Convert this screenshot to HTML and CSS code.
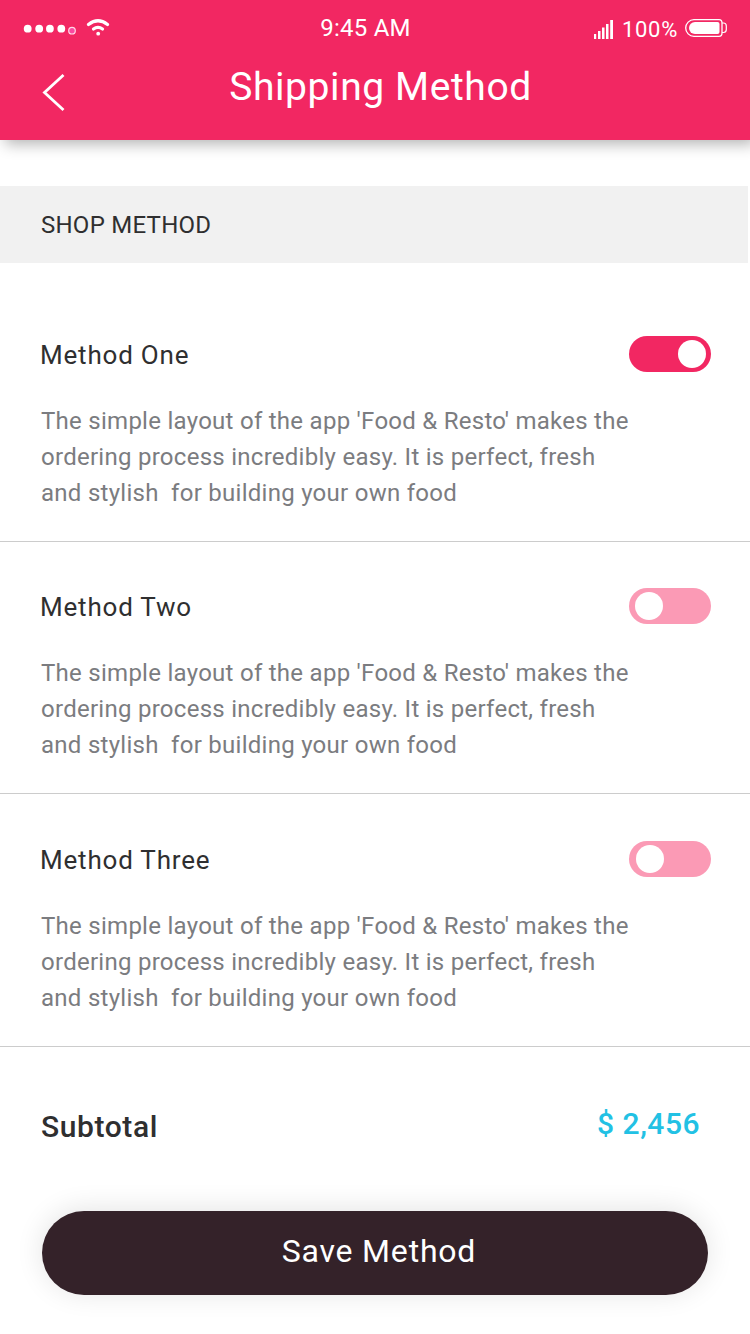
FILE: index.html
```html
<!DOCTYPE html>
<html lang="en">
<head>
<meta charset="utf-8">
<title>Shipping Method</title>
<link rel="stylesheet" href="styles.css">
</head>
<body>
<header class="header">
  <div class="status">
    <div class="status-left">
      <svg class="dots" width="54" height="14" viewBox="0 0 54 14"><g fill="#fff"><circle cx="4.700" cy="5.700" r="3.900"/><circle cx="16.200" cy="5.700" r="3.900"/><circle cx="26.900" cy="5.700" r="3.900"/><circle cx="38.300" cy="5.700" r="3.900"/></g><circle cx="49" cy="7.700" r="3.300" fill="#fb49a0" stroke="#ffd9e6" stroke-width="1.200"/></svg>
      <svg class="wifi" width="24" height="19" viewBox="0 0 24 19"><g fill="none" stroke="#fff" stroke-width="3.200" stroke-linecap="round"><path d="M2.500 6.500Q12-1 21.500 6.500"/><path d="M7.500 11Q12 7.700 16.500 11"/></g><circle cx="12.200" cy="15.700" r="1.900" fill="#fff"/></svg>
    </div>
    <span class="time">9:45 AM</span>
    <div class="status-right">
      <svg class="signal" width="20" height="19" viewBox="0 0 20 19" fill="#fff"><path d="M0 14h2.200v5H0zM4 11h2.500v8H4zM8 7.500h2.500V19H8zM12 4h2.500v15H12zM16.200 0H19v19h-2.800z"/></svg>
      <span class="percent">100%</span>
      <svg class="battery" width="43" height="18" viewBox="0 0 43 18"><path d="M9 .7h25q3 0 3 3.300v10q0 3.300-3 3.300H9A8.300 8.300 0 0 1 9 .7z" fill="none" stroke="#fff" stroke-width="1.300"/><path d="M10 3H32.500q2 0 2 2v8q0 2-2 2H10a6 6 0 0 1 0-12z" fill="#fff"/><path d="M37 4h1.500q2.800 0 2.800 3v3.500q0 3-2.800 3H37" fill="none" stroke="#fff" stroke-width="1.200"/></svg>
    </div>
  </div>
  <div class="titlebar">
    <svg class="back" width="24" height="40" viewBox="0 0 24 40"><path d="M21.500 2 2.500 19.500 21.500 37" fill="none" stroke="#fff" stroke-width="2.800"/></svg>
    <h1 class="title">Shipping Method</h1>
  </div>
</header>
<main>
  <h2 class="section">SHOP METHOD</h2>
  <section class="method first">
    <div class="row"><h3 class="name">Method One</h3><span class="toggle on"><i class="knob"></i></span></div>
    <p class="desc">The simple layout of the app 'Food &amp; Resto' makes the<br>ordering process incredibly easy. It is perfect, fresh<br>and stylish&nbsp; for building your own food</p>
  </section>
  <section class="method second">
    <div class="row"><h3 class="name">Method Two</h3><span class="toggle"><i class="knob"></i></span></div>
    <p class="desc">The simple layout of the app 'Food &amp; Resto' makes the<br>ordering process incredibly easy. It is perfect, fresh<br>and stylish&nbsp; for building your own food</p>
  </section>
  <section class="method third">
    <div class="row"><h3 class="name">Method Three</h3><span class="toggle"><i class="knob"></i></span></div>
    <p class="desc">The simple layout of the app 'Food &amp; Resto' makes the<br>ordering process incredibly easy. It is perfect, fresh<br>and stylish&nbsp; for building your own food</p>
  </section>
  <div class="total"><span class="label">Subtotal</span><span class="price">$ 2,456</span></div>
  <button class="save">Save Method</button>
</main>
</body>
</html>
```
FILE: styles.css
```css
* { box-sizing: border-box; margin: 0; padding: 0; }
body { width: 750px; height: 1334px; overflow: hidden; background: #fff; font-family: Roboto, sans-serif; color: #2f2f30; }
.header { height: 140px; background: #f22762; color: #fff; box-shadow: 5px 4px 14px rgba(0,0,0,.3); }
.status { height: 56px; display: grid; grid-template-columns: 1fr auto 1fr; padding: 0 23px 0 23px; }
.status svg { display: block; }
.status-left { display: flex; align-items: flex-start; gap: 9px; }
.dots { margin-top: 23px; }
.wifi { margin-top: 18px; }
.time { font-size: 24px; line-height: 28px; padding-top: 14px; letter-spacing: .25px; margin-left: -19px; }
.status-right { display: flex; justify-content: flex-end; align-items: flex-start; }
.signal { margin: 20px 8px 0 0; }
.percent { font-size: 22px; line-height: 26px; padding-top: 17px; margin-right: 7px; letter-spacing: .7px; }
.battery { margin-top: 19px; margin-right: -1px; }
.titlebar { display: grid; grid-template-columns: 1fr auto 1fr; padding: 0 42px; }
.back { margin-top: 17px; }
.title { font-size: 39px; font-weight: 400; line-height: 48px; letter-spacing: .6px; padding-top: 7px; margin-left: 11px; }
.section { width: 748px; height: 77px; margin-top: 46px; padding: 1px 0 0 41px; background: #f1f1f1; font-size: 24px; font-weight: 400; line-height: 77px; letter-spacing: .25px; }
.method { height: 252px; border-bottom: 1px solid #ccc; padding: 46px 39px 0 41px; }
.first { height: 279px; padding-top: 73px; }
.third { height: 253px; padding-top: 47px; }
.row { display: flex; justify-content: space-between; height: 36px; }
.name { margin-left: -1px; font-size: 26px; font-weight: 400; line-height: 38px; letter-spacing: .8px; }
.toggle { width: 82px; height: 36px; border-radius: 18px; background: #fb9ab5; padding: 4px 6px; }
.knob { display: block; width: 28px; height: 28px; border-radius: 50%; background: #fff; }
.on { background: #f22762; }
.on .knob { margin-left: 43px; }
.third .knob { margin-left: 1px; }
.desc { margin-top: 31px; font-size: 24px; line-height: 36px; letter-spacing: .27px; color: #7b7c80; }
.total { height: 164px; display: flex; justify-content: space-between; padding: 60px 50px 0 41px; font-size: 30px; line-height: 40px; font-weight: 500; letter-spacing: .6px; }
.price { color: #22c1e4; margin-top: -3px; letter-spacing: .5px; }
.save { display: block; width: 666px; height: 84px; margin-left: 42px; border: 0; border-radius: 42px; background: #342229; color: #fff; font: 400 32px/38px Roboto, sans-serif; letter-spacing: .8px; padding: 0 0 5px 8px; box-shadow: 0 -2px 28px rgba(0,0,0,.11); }
```
